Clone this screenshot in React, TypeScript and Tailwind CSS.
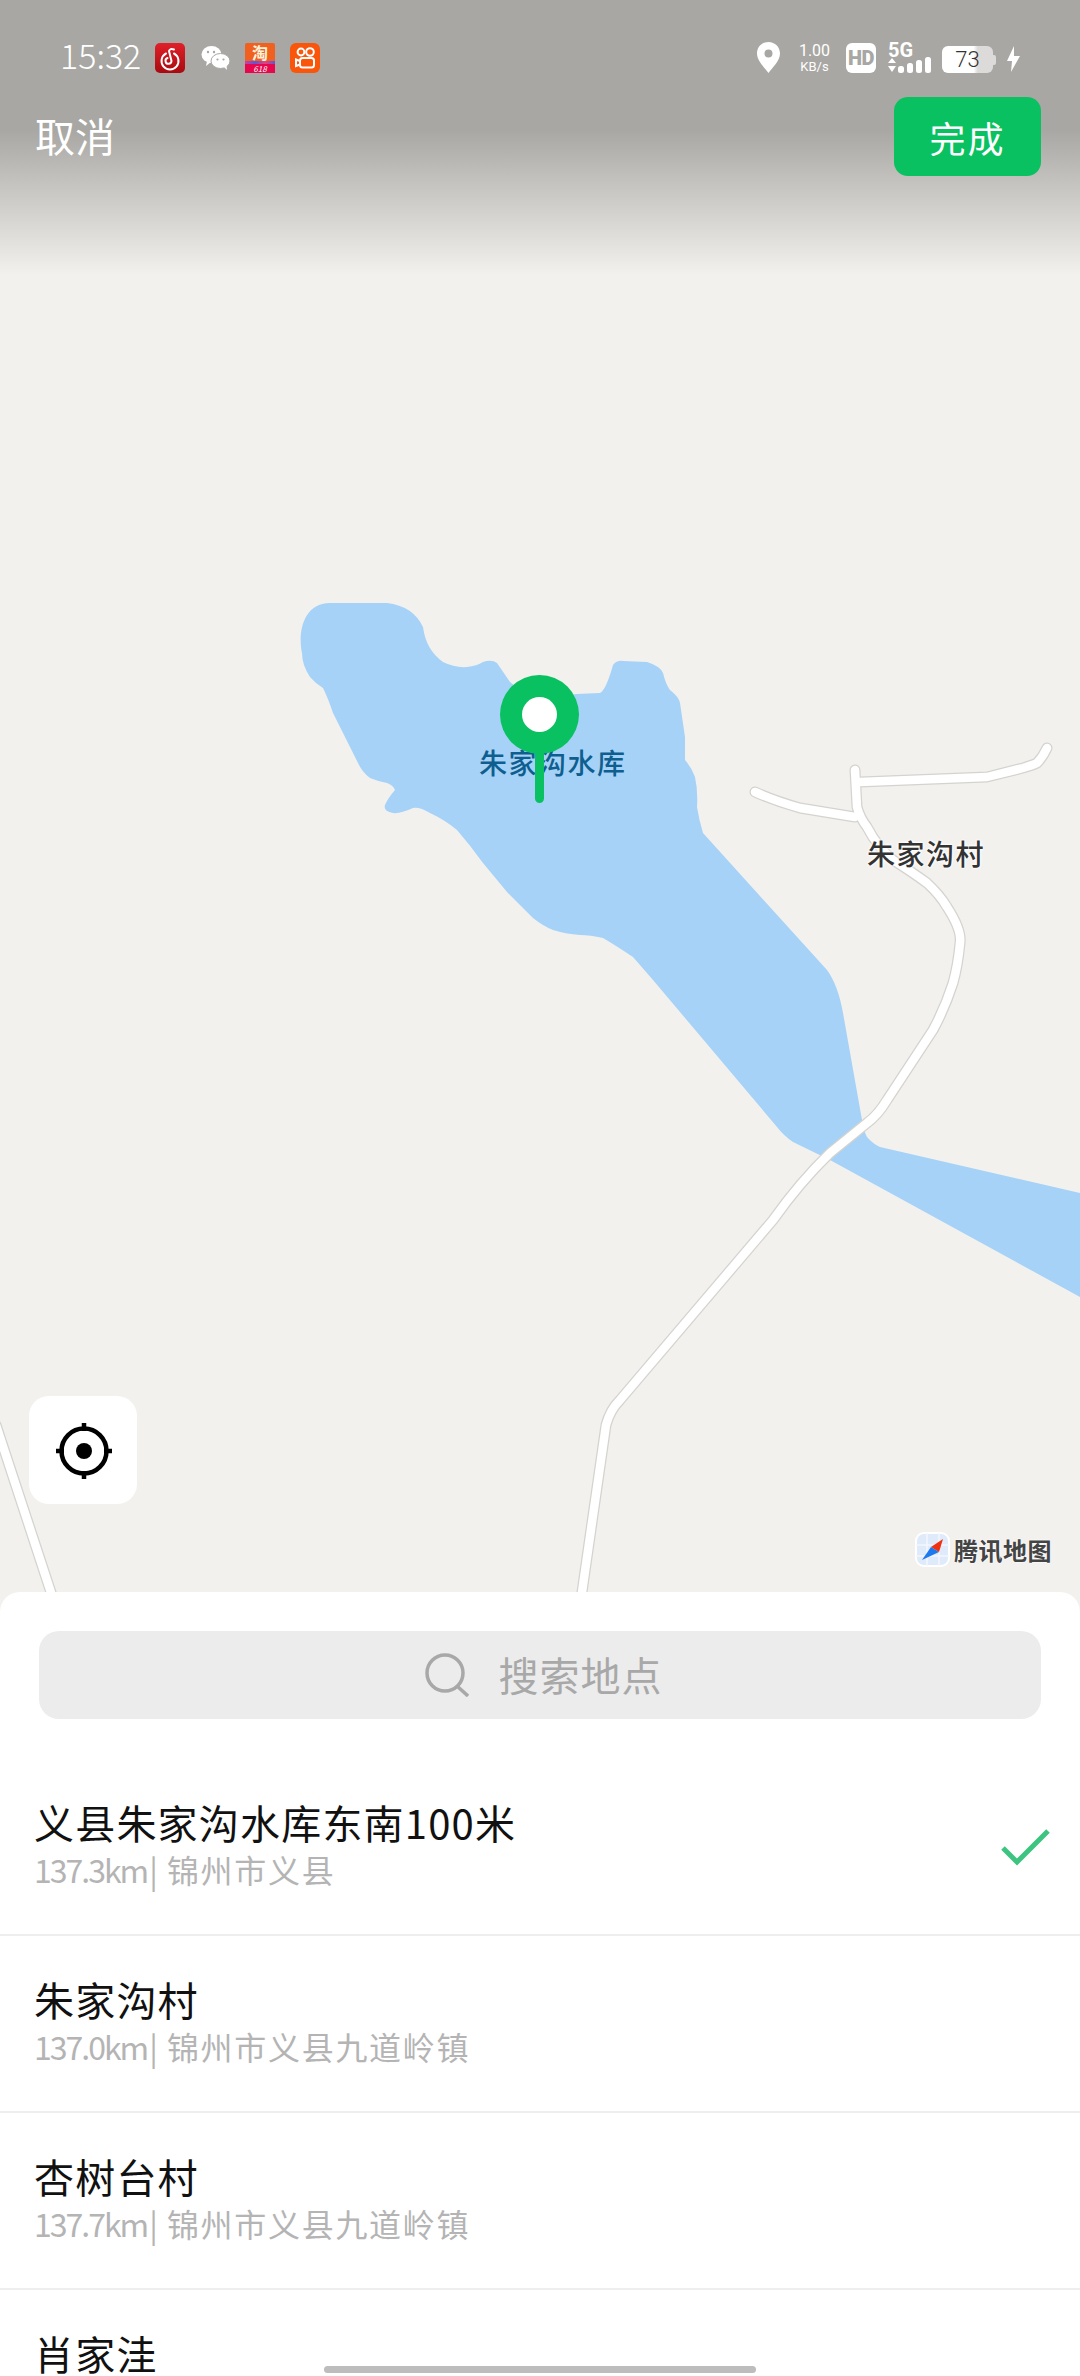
const places = [
  { name: "义县朱家沟水库东南100米", info: "137.3km", area: "锦州市义县", checked: true },
  { name: "朱家沟村", info: "137.0km", area: "锦州市义县九道岭镇", checked: false },
  { name: "杏树台村", info: "137.7km", area: "锦州市义县九道岭镇", checked: false },
  { name: "肖家洼", info: "", area: "", checked: false },
];

const lake =
  "M330 603 L387 603 Q413 606 423 627 Q426 650 443 662 Q455 668 467 667 Q477 666 483 662 Q492 659 497 663 L510 682 Q530 700 577 694 L600 693 Q606 690 613 665 Q617 660 623 661 L647 662 Q660 666 663 673 Q666 685 670 690 Q679 697 680 703 L685 737 L685 760 Q692 768 695 777 Q698 790 697 807 Q699 820 703 833 L827 970 Q838 985 843 1013 L862 1120 Q864 1132 867 1137 Q873 1144 880 1147 L1080 1193 L1080 1297 L830 1160 L793 1142 Q784 1136 777 1127 L653 980 L633 957 Q615 945 603 938 Q590 935 580 935 Q565 934 553 930 Q543 926 533 918 L507 892 L483 863 Q470 845 457 830 Q445 820 430 813 Q420 807 413 808 Q400 814 393 813 Q383 811 385 805 Q388 798 395 790 Q393 785 387 783 Q377 781 370 778 Q362 772 358 763 L333 713 Q328 698 323 688 Q315 683 310 677 Q302 665 302 653 C298 635 302 603 330 603 Z";

const roads = [
  "M855 770 Q856 790 857 807 Q860 818 867 827 Q878 848 893 860 Q912 872 927 883 Q940 895 947 907 Q962 930 960 943 Q958 965 953 983 Q945 1008 933 1030 L887 1100 Q878 1115 867 1123 L830 1153 Q800 1182 773 1220 L620 1400 Q610 1410 606 1425 L578 1620",
  "M860 782 L987 777 L1023 768 Q1033 765 1037 763 Q1043 757 1047 748",
  "M755 792 Q775 801 800 808 L855 817",
  "M-4 1425 L60 1620",
];

function StatusBar() {
  return (
    <div className="flex h-[97px] items-start justify-between pt-[43px] pr-[60px] pl-[60px]">
      <div className="flex items-center">
        <span className="mt-[-6px] w-[80px] text-[34px] leading-[30px] font-light whitespace-nowrap text-white">15:32</span>
        {/* netease music */}
        <svg width="30" height="30" viewBox="0 0 30 30" className="ml-[15px]">
          <defs>
            <linearGradient id="ne" x1="0" y1="0" x2="0" y2="1">
              <stop offset="0" stopColor="#e0202a" />
              <stop offset="1" stopColor="#a80a10" />
            </linearGradient>
          </defs>
          <rect width="30" height="30" rx="5" fill="url(#ne)" />
          <path d="M19 6.500 Q15 5 14 8 L16.500 18 A3 3 0 1 1 12.500 15 M11 10.500 A8.500 8.500 0 1 0 19 10.500" fill="none" stroke="#fff" strokeWidth="2" strokeLinecap="round" />
        </svg>
        {/* wechat */}
        <svg width="29" height="24" viewBox="0 0 29 24" className="ml-[16px]">
          <ellipse cx="10.500" cy="8.500" rx="10" ry="8.500" fill="#fff" />
          <path d="M6 15 L5 20 L10 16 Z" fill="#fff" />
          <ellipse cx="19.500" cy="15" rx="9.500" ry="7.500" stroke="#a8a7a3" strokeWidth="1" fill="#fff" />
          <path d="M23 21 L26 24 L25.500 19 Z" fill="#fff" />
          <circle cx="7" cy="6" r="1.200" fill="#a8a7a3" />
          <circle cx="13" cy="6" r="1.200" fill="#a8a7a3" />
          <circle cx="16.500" cy="13.500" r="1.100" fill="#a8a7a3" />
          <circle cx="22.500" cy="13.500" r="1.100" fill="#a8a7a3" />
        </svg>
        {/* taobao 618 */}
        <div className="ml-[15px] flex h-[30px] w-[30px] flex-col rounded-[2px] bg-[#f0601f]">
          <div className="flex h-[18px] items-center justify-center text-[16px] leading-[18px] font-bold text-[#fff3dc]">淘</div>
          <div className="h-[3px] bg-[linear-gradient(90deg,#d83a9a,#5a58d8,#e8407a,#5a58d8)]" />
          <div className="flex h-[9px] items-center justify-center bg-[#e8074f] text-[8px] leading-[9px] text-white italic">618</div>
        </div>
        {/* kuaishou */}
        <svg width="30" height="30" viewBox="0 0 30 30" className="ml-[15px]">
          <rect width="30" height="30" rx="6" fill="#f9560c" />
          <circle cx="11" cy="9" r="3.400" fill="none" stroke="#fff" strokeWidth="2" />
          <circle cx="20" cy="9" r="3.800" fill="none" stroke="#fff" strokeWidth="2" />
          <rect x="10" y="15" width="14" height="9.500" rx="2.500" fill="none" stroke="#fff" strokeWidth="2" />
          <path d="M10 18 L6 16.500 L6 23 L10 21.500" fill="none" stroke="#fff" strokeWidth="2" />
        </svg>
      </div>
      <div className="flex items-start">
        <svg width="23" height="31" viewBox="0 0 23 31" className="mt-[-1px]">
          <path fillRule="evenodd" d="M11.500 0 C18 0 23 5 23 11.500 C23 19 15 26 11.500 31 C8 26 0 19 0 11.500 C0 5 5 0 11.500 0 Z M11.500 7.500 A4 4 0 1 0 11.500 15.500 A4 4 0 1 0 11.500 7.500 Z" fill="#fff" />
        </svg>
        <div className="ml-[20px] flex w-[29px] flex-col items-center font-['Roboto',sans-serif] whitespace-nowrap text-white">
          <span className="text-[16px] leading-[15px]">1.00</span>
          <span className="mt-[2px] text-[13px] leading-[13px]">KB/s</span>
        </div>
        <div className="ml-[17px] flex h-[30px] w-[30px] items-center justify-center rounded-[6px] bg-white font-['Roboto',sans-serif] text-[20px] leading-none font-black tracking-[-0.5px] text-[#a8a7a3]">
          HD
        </div>
        {/* 5G + signal bars */}
        <div className="relative ml-[12px] h-[30px] w-[44px] font-['Roboto',sans-serif] text-white">
          <span className="absolute top-0 left-0 text-[20px] leading-[15px] font-bold">5G</span>
          <svg width="44" height="16" viewBox="0 0 44 16" className="absolute top-[14px] left-0">
            <path d="M4 1 L8 6 L0 6 Z M4 15 L0 9 L8 9 Z" fill="#fff" />
            <rect x="10" y="9" width="6" height="7" rx="2.500" fill="#fff" />
            <rect x="19" y="6" width="6" height="10" rx="2.500" fill="#fff" />
            <rect x="28" y="3" width="6" height="13" rx="2.500" fill="#fff" />
            <rect x="37" y="0" width="6" height="16" rx="2.500" fill="#fff" />
          </svg>
        </div>
        <div className="mt-[3px] ml-[10px] flex items-center">
          <div className="flex h-[27px] w-[51px] items-center justify-center rounded-[6px] bg-[linear-gradient(90deg,#ffffff_62%,#dcdbd9_70%)] font-['Roboto',sans-serif] text-[22px] font-light text-[#333]">
            73
          </div>
          <div className="h-[10px] w-[3px] rounded-r-[2px] bg-[#dcdbd9]" />
        </div>
        <svg width="14" height="26" viewBox="0 0 14 26" className="mt-[3px] ml-[10px]">
          <path d="M8 0 L1 15 L6 15 L5 26 L14 10 L8 10 Z" fill="#fff" />
        </svg>
      </div>
    </div>
  );
}

function MapView() {
  return (
    <div className="relative h-[1612px] overflow-hidden bg-[#f2f1ee]">
      {/* map drawing */}
      <svg width="1080" height="1612" viewBox="0 0 1080 1612" className="block">
        <path d={lake} fill="#a6d2f7" />
        {roads.map((d) => (
          <path key={d} d={d} fill="none" stroke="#d4d3cf" strokeWidth="11" strokeLinecap="round" strokeLinejoin="round" />
        ))}
        {roads.map((d) => (
          <path key={d} d={d} fill="none" stroke="#ffffff" strokeWidth="8.500" strokeLinecap="round" strokeLinejoin="round" />
        ))}
      </svg>

      {/* map labels */}
      <span className="absolute top-[746px] left-[479px] text-[28px] leading-[32px] font-medium tracking-[1.5px] whitespace-nowrap text-[#0e5f8f]">
        朱家沟水库
      </span>
      <span className="absolute top-[837px] left-[867px] text-[28px] leading-[32px] font-medium tracking-[1.5px] whitespace-nowrap text-[#333] [text-shadow:0_0_3px_#fff,0_0_3px_#fff,0_0_3px_#fff]">
        朱家沟村
      </span>

      {/* pin */}
      <div className="absolute top-[675px] left-[500px] flex w-[79px] flex-col items-center">
        <div className="flex h-[79px] w-[79px] items-center justify-center rounded-full bg-[#09c160]">
          <div className="h-[35px] w-[35px] rounded-full bg-white" />
        </div>
        <div className="mt-[-2px] h-[51px] w-[9px] rounded-b-full bg-[#09c160]" />
      </div>

      {/* locate button */}
      <div className="absolute top-[1396px] left-[29px] flex h-[108px] w-[108px] items-center justify-center rounded-[20px] bg-white">
        <svg width="56" height="56" viewBox="0 0 56 56" className="mt-[2px] ml-[2px]">
          <circle cx="28" cy="28" r="22.500" fill="none" stroke="#000" strokeWidth="4.500" />
          <circle cx="28" cy="28" r="8" fill="#000" />
          <path d="M28 0 V8 M28 48 V56 M0 28 H8 M48 28 H56" stroke="#000" strokeWidth="4.500" />
        </svg>
      </div>

      {/* tencent map logo */}
      <div className="absolute top-[1532px] left-[915px] flex items-center">
        <svg width="35" height="35" viewBox="0 0 35 35">
          <rect x="1" y="1" width="33" height="33" rx="8" fill="#dfeafa" stroke="#ffffff" strokeWidth="2" />
          <path d="M12 1 V34 M24 1 V34 M1 13 H34 M1 24 H34" stroke="#f5f8fd" strokeWidth="1.500" />
          <path d="M28 7 L24 20 L16 15 Z" fill="#f0300f" />
          <path d="M7 28 L16 15 L24 20 Z" fill="#1e78ee" />
        </svg>
        <span className="ml-[4px] text-[24px] leading-[30px] font-bold tracking-[0.5px] whitespace-nowrap text-[#444] [text-shadow:0_0_2px_#fff,0_0_2px_#fff]">
          腾讯地图
        </span>
      </div>

      {/* top shade with status bar and actions */}
      <div className="absolute inset-x-0 top-0 h-[276px] bg-[linear-gradient(180deg,#a8a7a3_0%,#a8a7a3_47%,#c6c5c1_68%,#f2f1ee_100%)]">
        <StatusBar />
        <div className="flex items-start justify-between pr-[39px] pl-[35px]">
          <span className="mt-[15px] text-[40px] leading-[46px] text-white">取消</span>
          <div className="flex h-[79px] w-[147px] items-center justify-center rounded-[14px] bg-[#09c160] text-[36px] tracking-[2px] text-white">
            完成
          </div>
        </div>
      </div>
    </div>
  );
}

function PlaceRow({ place }: { place: (typeof places)[number] }) {
  return (
    <div className="flex h-[177px] shrink-0 items-start justify-between border-b-2 border-[#eeeeee] pr-[30px] pl-[34px]">
      <div className="pt-[39px]">
        <div className="text-[40px] leading-[48px] tracking-[1.2px] whitespace-nowrap text-[#111]">{place.name}</div>
        {place.info && (
          <div className="mt-[4px] flex items-center text-[32px] leading-[38px] whitespace-nowrap text-[#b4b4b4]">
            <span className="tracking-[-2px]">{place.info}</span>
            <span className="mr-[9px] ml-[2px]">|</span>
            <span className="tracking-[1.7px]">{place.area}</span>
          </div>
        )}
      </div>
      {place.checked && (
        <svg width="50" height="38" viewBox="0 0 50 38" className="mt-[70px]">
          <path d="M3 19 L17 33 L48 2" fill="none" stroke="#3cc480" strokeWidth="5" />
        </svg>
      )}
    </div>
  );
}

export default function App() {
  return (
    <div className="relative h-[2376px] w-[1080px] overflow-hidden bg-white font-['Noto_Sans_CJK_SC','Noto_Sans',sans-serif]">
      <MapView />
      <div className="relative mt-[-20px] flex h-[784px] flex-col overflow-hidden rounded-t-[20px] bg-white">
        <div className="px-[39px] pt-[39px]">
          <div className="flex h-[88px] items-center justify-center rounded-[20px] bg-[#ececec] pl-[7px]">
            <svg width="44" height="44" viewBox="0 0 44 44">
              <circle cx="20" cy="20" r="18" fill="none" stroke="#a8a8a8" strokeWidth="3.500" />
              <path d="M32 33 L43 43" stroke="#a8a8a8" strokeWidth="3.500" />
            </svg>
            <span className="mt-[-2px] ml-[30px] text-[40px] leading-[48px] tracking-[1px] text-[#a8a8a8]">搜索地点</span>
          </div>
        </div>
        <div className="mt-[40px] flex flex-col">
          {places.map((place) => (
            <PlaceRow key={place.name} place={place} />
          ))}
        </div>
      </div>
      <div className="absolute top-[2366px] left-[324px] h-[7px] w-[432px] rounded-full bg-[#bdbdbd]" />
    </div>
  );
}
